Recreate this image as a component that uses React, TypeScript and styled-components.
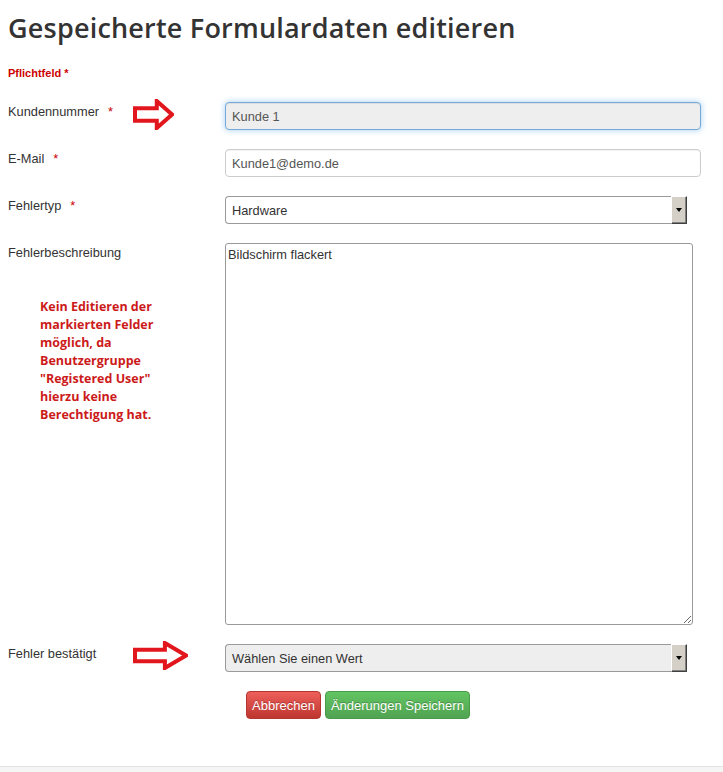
import React from "react";
import styled, { createGlobalStyle } from "styled-components";

const GlobalStyle = createGlobalStyle`
	html, body {
		margin: 0;
		padding: 0;
		background: #fff;
	}
	body {
		font-family: "Liberation Sans", Arial, sans-serif;
		color: #333;
	}
`;

const Page = styled.div`
	min-height: 772px;
	display: flex;
	flex-direction: column;
`;

const Content = styled.div`
	flex: 1;
	padding: 0 8px;
`;

const Title = styled.h1`
	margin: 0;
	padding-top: 11px;
	font-family: "Open Sans", sans-serif;
	font-weight: 600;
	font-size: 27px;
	line-height: 34px;
	color: #333;
	letter-spacing: 0.2px;
`;

const Required = styled.div`
	margin-top: 21px;
	font-size: 11px;
	font-weight: bold;
	color: #cc0000;
	line-height: 14px;
`;

const Form = styled.form`
	margin-top: 22px;
	display: flex;
	flex-direction: column;
	gap: 19px;
`;

const Row = styled.div`
	display: flex;
	align-items: flex-start;
`;

const LabelCol = styled.div`
	width: 217px;
	flex-shrink: 0;
	display: flex;
	flex-direction: column;
`;

const LabelLine = styled.div`
	display: flex;
	align-items: flex-start;
`;

const LabelText = styled.label`
	width: 125px;
	padding-top: 1px;
	font-size: 12.8px;
	line-height: 18px;
	color: #333;
	white-space: nowrap;
`;

const Star = styled.span`
	color: #cc0000;
	margin-left: 9px;
`;

const ArrowBox = styled.span<{ $mt: number }>`
	display: inline-flex;
	margin-top: ${(p) => p.$mt}px;
`;

const TextInput = styled.input<{ $readonly?: boolean }>`
	width: 476px;
	height: 28px;
	box-sizing: border-box;
	padding: 4px 6px;
	font-family: "Liberation Sans", Arial, sans-serif;
	font-size: 12.8px;
	color: #555;
	border-radius: 4px;
	outline: none;
	background: ${(p) => (p.$readonly ? "#eeeeee" : "#fff")};
	border: 1px solid ${(p) => (p.$readonly ? "#75a9d8" : "#cccccc")};
	box-shadow: ${(p) =>
		p.$readonly
			? "inset 0 1px 1px rgba(0,0,0,.075), 0 0 6px rgba(102,175,233,.6)"
			: "inset 0 1px 1px rgba(0,0,0,.05)"};
`;

const SelectBox = styled.div<{ $disabled?: boolean }>`
	width: 462px;
	height: 28px;
	box-sizing: border-box;
	display: flex;
	align-items: stretch;
	border: 1px solid #9a9a9a;
	border-right: none;
	border-radius: 4px 0 0 4px;
	background: ${(p) => (p.$disabled ? "#eeeeee" : "#fff")};
	font-size: 12.8px;
	color: #333;
`;

const SelectValue = styled.span`
	flex: 1;
	display: flex;
	align-items: center;
	padding-left: 6px;
`;

const DropButton = styled.span`
	width: 16px;
	display: flex;
	align-items: center;
	justify-content: center;
	background: #d4d0c8;
	border-top: 1px solid #fff;
	border-left: 1px solid #fff;
	border-right: 1px solid #404040;
	border-bottom: 1px solid #404040;
	box-shadow: inset -1px -1px 0 #808080;
	margin-top: -1px;
	margin-bottom: -1px;
	box-sizing: border-box;

	&::after {
		content: "";
		border-left: 3.5px solid transparent;
		border-right: 3.5px solid transparent;
		border-top: 4px solid #000;
	}
`;

const TextArea = styled.textarea`
	width: 468px;
	height: 382px;
	box-sizing: border-box;
	padding: 3px 2px;
	margin: 0;
	font-family: "Liberation Sans", Arial, sans-serif;
	font-size: 12.8px;
	color: #333;
	border: 1px solid #9a9a9a;
	border-radius: 3px;
	resize: both;
	outline: none;
	display: block;
`;

const Note = styled.div`
	margin-top: 36px;
	padding-left: 32px;
	font-family: "Open Sans", sans-serif;
	font-weight: bold;
	font-size: 12.5px;
	line-height: 18px;
	color: #cc1a1a;
`;

const ButtonRow = styled.div`
	display: flex;
	gap: 4px;
	padding-left: 238px;
`;

const Button = styled.button<{ $variant: "danger" | "success" }>`
	height: 28px;
	padding: 0 5px;
	font-family: "Liberation Sans", Arial, sans-serif;
	font-size: 13px;
	color: #fff;
	border-radius: 4px;
	cursor: pointer;
	text-shadow: 0 -1px 0 rgba(0,0,0,.25);
	border: 1px solid
		${(p) => (p.$variant === "danger" ? "#b33630" : "#4a9a4a")};
	background: ${(p) =>
		p.$variant === "danger"
			? "linear-gradient(#ee5f5b, #bd362f)"
			: "linear-gradient(#62c462, #51a351)"};
`;

const Footer = styled.div`
	height: 5px;
	background: #f5f5f5;
	border-top: 1px solid #e3e3e3;
`;

const Arrow = ({ w, h }: { w: number; h: number }) => {
	const head = w * 0.42;
	const sy1 = h * 0.3;
	const sy2 = h * 0.7;
	return (
		<svg width={w} height={h} viewBox={`0 0 ${w} ${h}`}>
			<polygon
				points={`2,${sy1} ${w - head},${sy1} ${w - head},2 ${w - 2},${h / 2} ${w - head},${h - 2} ${w - head},${sy2} 2,${sy2}`}
				fill="#fff"
				stroke="#e2161d"
				strokeWidth={4}
				strokeLinejoin="miter"
			/>
		</svg>
	);
};

const App = () => {
	return (
		<Page>
			<GlobalStyle />
			<Content>
				<Title>Gespeicherte Formulardaten editieren</Title>
				<Required>Pflichtfeld *</Required>
				<Form onSubmit={(e) => e.preventDefault()}>
					<Row>
						<LabelCol>
							<LabelLine>
								<LabelText>
									Kundennummer<Star>*</Star>
								</LabelText>
								<ArrowBox $mt={-3}>
									<Arrow w={41} h={31} />
								</ArrowBox>
							</LabelLine>
						</LabelCol>
						<TextInput $readonly readOnly defaultValue="Kunde 1" />
					</Row>
					<Row>
						<LabelCol>
							<LabelText>
								E-Mail<Star>*</Star>
							</LabelText>
						</LabelCol>
						<TextInput defaultValue="Kunde1@demo.de" />
					</Row>
					<Row>
						<LabelCol>
							<LabelText>
								Fehlertyp<Star>*</Star>
							</LabelText>
						</LabelCol>
						<SelectBox>
							<SelectValue>Hardware</SelectValue>
							<DropButton />
						</SelectBox>
					</Row>
					<Row>
						<LabelCol>
							<LabelText>Fehlerbeschreibung</LabelText>
							<Note>
								Kein Editieren der
								<br />
								markierten Felder
								<br />
								möglich, da
								<br />
								Benutzergruppe
								<br />
								"Registered User"
								<br />
								hierzu keine
								<br />
								Berechtigung hat.
							</Note>
						</LabelCol>
						<TextArea defaultValue="Bildschirm flackert" />
					</Row>
					<Row>
						<LabelCol>
							<LabelLine>
								<LabelText>Fehler bestätigt</LabelText>
								<ArrowBox $mt={-3}>
									<Arrow w={55} h={29} />
								</ArrowBox>
							</LabelLine>
						</LabelCol>
						<SelectBox $disabled>
							<SelectValue>Wählen Sie einen Wert</SelectValue>
							<DropButton />
						</SelectBox>
					</Row>
					<ButtonRow>
						<Button $variant="danger" type="button">
							Abbrechen
						</Button>
						<Button $variant="success" type="submit">
							Änderungen Speichern
						</Button>
					</ButtonRow>
				</Form>
			</Content>
			<Footer />
		</Page>
	);
};

export default App;
